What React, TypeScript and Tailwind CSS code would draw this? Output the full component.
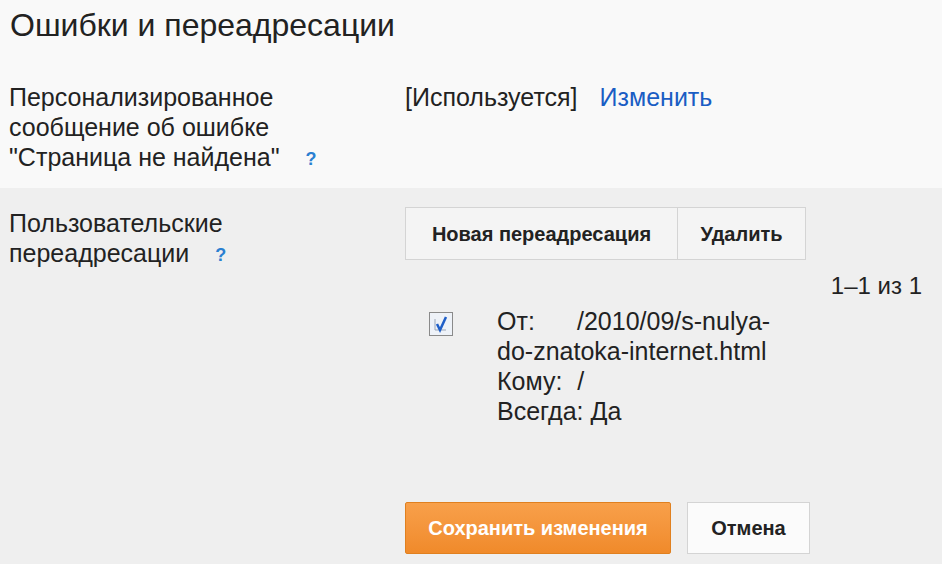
import React from 'react';

function Help() {
  return <span className="ml-[26px] text-[18px] font-bold text-[#2a7fd1] align-middle">?</span>;
}

export default function App() {
  return (
    <div className="w-[942px] h-[564px] overflow-hidden bg-[#f9f9f9] font-['Liberation_Sans',Arial,sans-serif] text-[#222]">
      {/* Header */}
      <div className="pl-[10px] pt-[5px] h-[72px] text-[32px] leading-[40px] text-[#222]">
        Ошибки и переадресации
      </div>

      {/* 404 message row */}
      <div className="grid grid-cols-[396px_1fr] pl-[9px] pt-[10px] h-[116px] text-[25px] leading-[30px]">
        <div>
          Персонализированное
          <br />
          сообщение об ошибке
          <br />
          "Страница не найдена"
          <Help />
        </div>
        <div className="flex gap-[22px]">
          <span>[Используется]</span>
          <span className="text-[#1a5dc4]">Изменить</span>
        </div>
      </div>

      {/* Redirects */}
      <div className="bg-[#efefef] h-[376px] grid grid-cols-[396px_1fr] pl-[9px] pt-[19px]">
        <div className="text-[25px] leading-[30px] pt-[1px]">
          Пользовательские
          <br />
          переадресации
          <Help />
        </div>
        <div className="pr-[20px]">
          <div className="flex">
            <button className="h-[53px] w-[273px] bg-[#f4f4f4] border border-[#d4d4d4] text-[20px] font-bold text-[#222]">
              Новая переадресация
            </button>
            <button className="h-[53px] w-[128px] bg-[#f4f4f4] border border-l-0 border-[#d4d4d4] text-[20px] font-bold text-[#222]">
              Удалить
            </button>
          </div>
          <div className="text-right text-[24px] leading-[30px] mt-[11px]">1–1 из 1</div>
          <div className="flex mt-[5px] text-[25px] leading-[30px]">
            <div className="ml-[24px] mt-[6px] w-[24px] h-[24px] border border-[#8a8a8a] bg-[#eef2f8] flex items-center justify-center">
              <svg width="18" height="18" viewBox="0 0 18 18">
                <path d="M3 4 L3 15 L14 15" fill="none" stroke="#9aa6b8" strokeWidth="1" />
                <path d="M5 9 L8 15 L14 2" fill="none" stroke="#1f5fc8" strokeWidth="2.5" />
              </svg>
            </div>
            <div className="ml-[44px] w-[320px]">
              <div className="flex">
                <span className="w-[80px]">От:</span>
                <span>/2010/09/s-nulya-</span>
              </div>
              <div>do-znatoka-internet.html</div>
              <div>
                Кому: <span className="ml-[8px]">/</span>
              </div>
              <div>Всегда: Да</div>
            </div>
          </div>
          <div className="flex gap-[16px] mt-[76px]">
            <button className="h-[52px] w-[266px] rounded-[2px] bg-gradient-to-b from-[#f8a04a] to-[#f08a2a] border border-[#e0801f] text-white text-[20px] font-bold">
              Сохранить изменения
            </button>
            <button className="h-[52px] w-[123px] bg-[#fbfbfb] border border-[#d4d4d4] text-[20px] font-bold text-[#222]">
              Отмена
            </button>
          </div>
        </div>
      </div>
    </div>
  );
}
